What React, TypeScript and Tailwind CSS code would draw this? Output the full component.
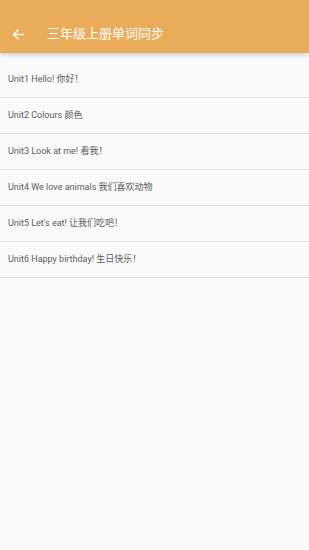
const units = [
  "Unit1 Hello! 你好！",
  "Unit2 Colours 颜色",
  "Unit3 Look at me! 看我！",
  "Unit4 We love animals 我们喜欢动物",
  "Unit5 Let's eat! 让我们吃吧！",
  "Unit6 Happy birthday! 生日快乐！",
];

export default function App() {
  return (
    <div
      className="w-[309px] h-[550px] bg-[#fafafa] flex flex-col overflow-hidden"
      style={{ fontFamily: "Roboto, 'Noto Sans CJK SC', sans-serif" }}
    >
      <header className="bg-[#ebac5a] shadow-[0_2px_4px_rgba(0,0,0,0.18)] relative z-10">
        <div className="h-[15px]" />
        <div className="h-[38px] flex items-center">
          <svg className="ml-[12px] w-[13px] h-[13px]" viewBox="0 0 24 24" fill="none" stroke="#fff" strokeWidth="2.6" strokeLinecap="square">
            <path d="M21 12H4" />
            <path d="M11 4l-8 8 8 8" />
          </svg>
          <span className="ml-[22px] text-[13px] text-white">三年级上册单词同步</span>
        </div>
      </header>
      <ul className="pt-[9px]">
        {units.map((u) => (
          <li
            key={u}
            className="h-[36px] flex items-center pl-[8px] border-b border-[#e2e2e2] text-[9px] text-[#5c5c5c]"
          >
            {u}
          </li>
        ))}
      </ul>
    </div>
  );
}
